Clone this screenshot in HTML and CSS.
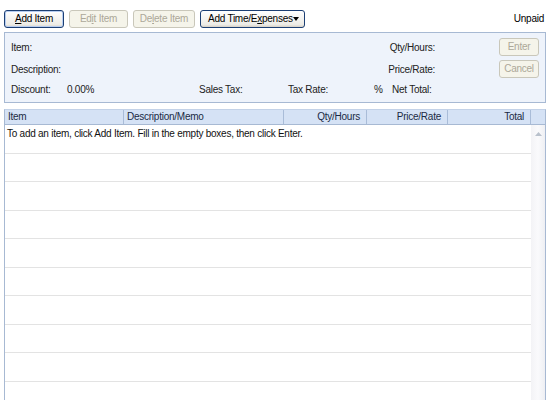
FILE: index.html
```html
<!DOCTYPE html>
<html lang="en">
<head>
  <meta charset="UTF-8">
  <title>Invoice Items</title>
  <link rel="stylesheet" href="styles.css">
</head>
<body>
  <div class="toolbar">
    <button class="btn btn-default"><u>A</u>dd Item</button>
    <button class="btn" disabled>Ed<u>i</u>t Item</button>
    <button class="btn" disabled>De<u>l</u>ete Item</button>
    <button class="btn btn-drop"><span>Add Time/E<u>x</u>penses</span> <span class="caret"></span></button>
    <span class="status">Unpaid</span>
  </div>

  <div class="entry">
    <div class="entry-row">
      <span class="lbl grow">Item:</span>
      <span class="lbl rlabel">Qty/Hours:</span>
      <button class="btn small" disabled>Enter</button>
    </div>
    <div class="entry-row">
      <span class="lbl grow">Description:</span>
      <span class="lbl rlabel">Price/Rate:</span>
      <button class="btn small" disabled>Cancel</button>
    </div>
    <div class="entry-row totals">
      <span class="lbl w-disc">Discount:</span>
      <span class="lbl w-pct">0.00%</span>
      <span class="lbl w-stax">Sales Tax:</span>
      <span class="lbl w-rate">Tax Rate:</span>
      <span class="lbl w-sym">%</span>
      <span class="lbl">Net Total:</span>
    </div>
  </div>

  <div class="grid">
    <div class="grid-head">
      <div class="col c-item">Item</div>
      <div class="col c-desc">Description/Memo</div>
      <div class="col c-qty num">Qty/Hours</div>
      <div class="col c-price num">Price/Rate</div>
      <div class="col c-total num">Total</div>
    </div>
    <div class="grid-body">
      <div class="rows">
        <div class="row">To add an item, click Add Item. Fill in the empty boxes, then click Enter.</div>
        <div class="row"></div>
        <div class="row"></div>
        <div class="row"></div>
        <div class="row"></div>
        <div class="row"></div>
        <div class="row"></div>
        <div class="row"></div>
        <div class="row"></div>
        <div class="row"></div>
      </div>
      <div class="scrollbar">
        <svg width="7" height="4" viewBox="0 0 7 4"><path d="M0 4 L3.5 0 L7 4 Z" fill="#b9c1cc"/></svg>
      </div>
    </div>
  </div>
</body>
</html>
```

FILE: styles.css
```css
body {
  margin: 0;
  background: #fff;
  font-family: "Liberation Sans", Arial, sans-serif;
  font-size: 10px;
  letter-spacing: -0.25px;
  color: #111;
  overflow: hidden;
}
u {
  text-decoration: underline;
}
.toolbar {
  display: flex;
  align-items: center;
  gap: 5px;
  padding: 9px 6px 0 4px;
  height: 19px;
}
.btn {
  font-family: inherit;
  font-size: 10px;
  letter-spacing: inherit;
  height: 18px;
  padding: 0 4px;
  border: 1px solid #c9c7ba;
  border-radius: 3px;
  background: #f5f4ea;
  color: #aca899;
  line-height: 16px;
  white-space: nowrap;
}
.btn:not([disabled]) {
  border-color: #1c3f74;
  color: #000;
  background: linear-gradient(#ffffff, #ecebe6 85%, #d6d0c5);
}
.btn-default {
  width: 60px;
  box-shadow: inset 0 0 0 1px #b7cdf0;
}
.toolbar .btn[disabled] {
  width: 59px;
}
.toolbar .btn[disabled] + .btn[disabled] {
  width: 62px;
}
.btn-drop {
  width: 105px;
  padding: 0 7px 0 7px;
  display: flex;
  align-items: center;
  justify-content: space-between;
}
.caret {
  width: 0;
  height: 0;
  border-left: 3px solid transparent;
  border-right: 3px solid transparent;
  border-top: 4px solid #000;
}
.status {
  margin-left: auto;
  color: #000;
}
.entry {
  margin: 4px 4px 0;
  border: 1px solid #a7b9d3;
  background: #eef3fb;
  padding: 5px 6px 4px 6px;
  display: flex;
  flex-direction: column;
  gap: 4px;
}
.entry-row {
  display: flex;
  align-items: center;
  height: 18px;
}
.lbl {
  color: #222;
  white-space: nowrap;
}
.grow {
  flex: 1;
}
.rlabel {
  margin-right: 64px;
}
.btn.small {
  width: 40px;
  padding: 0;
  text-align: center;
}
.totals {
  margin-top: -2px;
}
.w-disc { width: 56px; }
.w-pct { width: 132px; }
.w-stax { width: 89px; }
.w-rate { width: 86px; }
.w-sym { width: 18px; }
.grid {
  margin: 6px 4px 0;
  border-left: 1px solid #a7b9d3;
  border-right: 1px solid #a7b9d3;
  border-top: 1px solid #c3d2e8;
}
.grid-head {
  display: flex;
  height: 14px;
  background: #d5e2f5;
  border-bottom: 1px solid #a7b9d3;
}
.col {
  line-height: 14px;
  padding: 0 6px 0 3px;
  border-right: 1px solid #a9bcd8;
  box-sizing: border-box;
  color: #1a2a44;
}
.num {
  text-align: right;
}
.c-item { width: 119px; }
.c-desc { width: 160px; }
.c-qty { width: 83px; }
.c-price { width: 81px; }
.c-total { width: 83px; }
.grid-body {
  display: flex;
  height: 275px;
}
.rows {
  flex: 1;
}
.row {
  height: 28.5px;
  box-sizing: border-box;
  border-bottom: 1px solid #e3e3e3;
  padding: 3px 2px 0;
  white-space: nowrap;
}
.scrollbar {
  width: 14px;
  background: linear-gradient(90deg, #f3f3f6, #fafafc 50%, #eeeff3);
  display: flex;
  justify-content: center;
  padding-top: 7px;
  box-sizing: border-box;
}
```
